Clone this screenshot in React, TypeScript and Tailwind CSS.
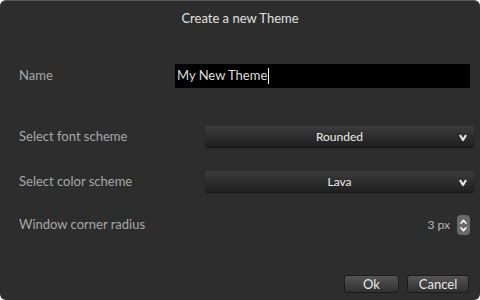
import React from 'react';

const Chevron: React.FC<{ up?: boolean; className?: string }> = ({ up, className }) => (
  <svg viewBox="0 0 8 6" className={className} fill="none" stroke="currentColor" strokeWidth={1.8} strokeLinecap="round" strokeLinejoin="round">
    <path d={up ? 'M1 5 L4 1.5 L7 5' : 'M1 1 L4 4.5 L7 1'} />
  </svg>
);

// the dropdown arrow is a bold little "v"
const Vee: React.FC<{ className?: string }> = ({ className }) => (
  <svg viewBox="0 0 8 7" className={className} fill="none" stroke="currentColor" strokeWidth={2.2} strokeLinejoin="round">
    <path d="M1 1 L4 6 L7 1" />
  </svg>
);

const Select: React.FC<{ value: string }> = ({ value }) => (
  <div className="relative w-[269px] h-[21px] rounded-[2px] bg-gradient-to-b from-[#3c3c3c] to-[#1f1f1f] shadow-[0_1px_1px_rgba(0,0,0,0.5)] flex items-center justify-center text-[12px] text-[#ececec]">
    <span>{value}</span>
    <Vee className="absolute right-[7px] top-[8px] w-[8px] h-[7px] text-[#e6e6e6]" />
  </div>
);

const Row: React.FC<{ label: string; children: React.ReactNode; className?: string }> = ({ label, children, className }) => (
  <div className={`flex items-center justify-between ${className ?? ''}`}>
    <span className="text-[13px] text-[#a8a8a8]">{label}</span>
    {children}
  </div>
);

const Button: React.FC<{ label: string; w: string }> = ({ label, w }) => (
  <button className={`${w} h-[18px] rounded-[3px] border border-[#1c1c1c] bg-gradient-to-b from-[#555] to-[#303030] text-[13px] leading-none text-[#e8e8e8] flex items-center justify-center`}>
    {label}
  </button>
);

export default function App() {
  return (
    <div className="w-[480px] h-[300px] bg-white" style={{ fontFamily: 'Lato, "DejaVu Sans", sans-serif' }}>
      <div className="w-full h-full rounded-[6px] bg-[#2d2d2d] border-t border-[#555] flex flex-col">
        <div className="h-[36px] flex items-center justify-center text-[13px] text-[#e0e0e0]">Create a new Theme</div>

        <div className="flex flex-col pl-[19px] pr-[6px]">
          <Row label="Name" className="mt-[27px] pr-[4px]">
            <div className="w-[295px] h-[24px] bg-black flex items-center pl-[2px] text-[13px] text-[#dcdcdc]">
              My New Theme<span className="ml-[1px] w-px h-[16px] bg-white" />
            </div>
          </Row>

          <Row label="Select font scheme" className="mt-[38px]">
            <Select value="Rounded" />
          </Row>

          <Row label="Select color scheme" className="mt-[24px]">
            <Select value="Lava" />
          </Row>

          <Row label="Window corner radius" className="mt-[23px] pr-[4px]">
            <div className="flex items-center gap-[7px]">
              <span className="text-[12px] text-[#b8b8b8]">3 px</span>
              <div className="w-[13px] h-[20px] rounded-[4px] bg-[#6a6a6a] flex flex-col items-center justify-center gap-[3px] text-white">
                <Chevron up className="w-[7px] h-[5px]" />
                <Chevron className="w-[7px] h-[5px]" />
              </div>
            </div>
          </Row>
        </div>

        <div className="mt-auto mb-[7px] mr-[11px] flex justify-end gap-[8px]">
          <Button label="Ok" w="w-[55px]" />
          <Button label="Cancel" w="w-[62px]" />
        </div>
      </div>
    </div>
  );
}
